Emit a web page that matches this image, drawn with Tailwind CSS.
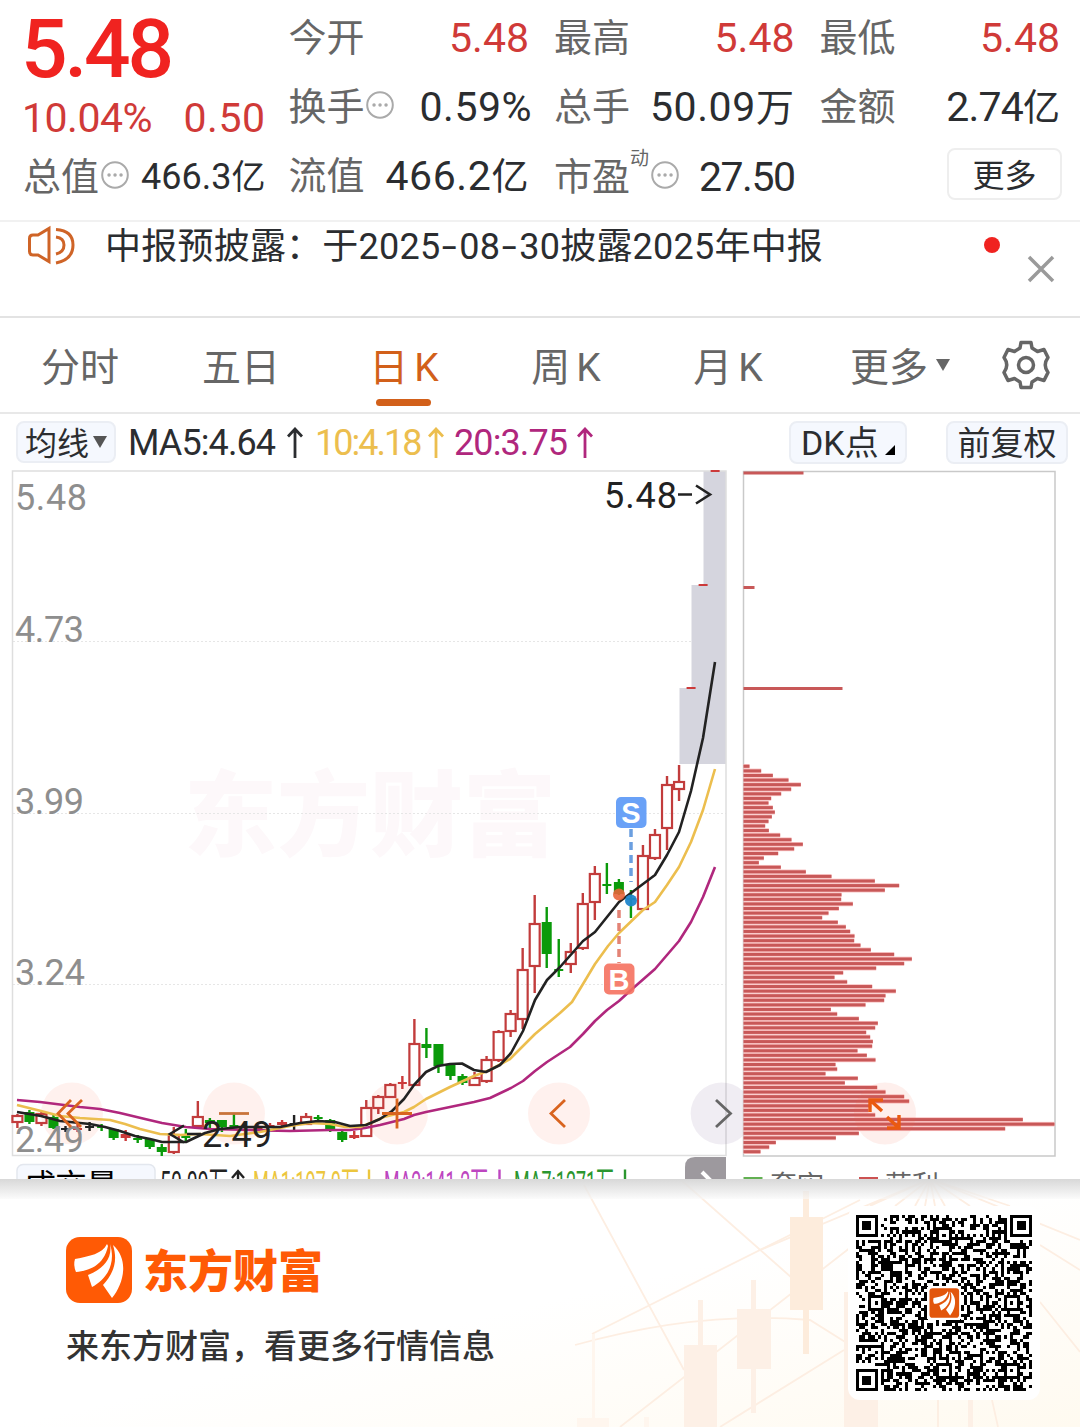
<!DOCTYPE html>
<html lang="zh-CN">
<head>
    <meta charset="UTF-8">
    <meta name="viewport" content="width=device-width, initial-scale=1.0">
    <title>东方财富 - 日K行情</title>
    <script src="https://cdn.jsdelivr.net/npm/@tailwindcss/browser@4"></script>
</head>
<body class="bg-white font-[Roboto,'Noto_Sans_CJK_SC',sans-serif] text-[#2b2d30]">
    <div class="w-[1080px] h-[1427px] overflow-hidden flex flex-col">

        <!-- 行情概览 -->
        <header class="h-[222px] shrink-0 pl-6 pr-5 border-b-2 border-[#f1f1f1] grid grid-cols-4 gap-x-[26px] text-[38px] leading-[69px] whitespace-nowrap">
            <div class="flex flex-col pt-px">
                <div class="h-[84px] -ml-[3px] leading-[96px] text-[82px] font-medium tracking-[-3.2px] text-[#f02320]">5.48</div>
                <div class="h-[58px] leading-[66px] flex justify-between text-[41px] text-[#d03a38]"><span class="tracking-[-0.5px] -ml-0.5">10.04%</span><span class="tracking-[0.5px] -mr-0.5">0.50</span></div>
                <div class="h-[69px] flex justify-between items-center">
                    <span class="text-[#666] flex items-center -ml-px">总值<svg class="w-7 h-7 mb-1.5 ml-0.5 text-[#aaa]" viewBox="0 0 28 28" fill="none" stroke="currentColor"><circle cx="14" cy="14" r="12.8" stroke-width="2"/><path d="M8 14h.1M14 14h.1M20 14h.1" stroke-width="3.4" stroke-linecap="round"/></svg></span>
                    <span class="text-[36px] -mr-0.5">466.3<span class="text-[34px]">亿</span></span>
                </div>
            </div>
            <div class="pt-1 -ml-px">
                <div class="flex justify-between"><span class="text-[#666]">今开</span><span class="text-[41px] text-[#d03a38]">5.48</span></div>
                <div class="flex justify-between">
                    <span class="text-[#666] flex items-center">换手<svg class="w-7 h-7 ml-px mb-1.5 text-[#aaa]" viewBox="0 0 28 28" fill="none" stroke="currentColor"><circle cx="14" cy="14" r="12.8" stroke-width="2"/><path d="M8 14h.1M14 14h.1M20 14h.1" stroke-width="3.4" stroke-linecap="round"/></svg></span>
                    <span class="text-[41px] tracking-[0.5px] -mr-[3px]">0.59%</span>
                </div>
                <div class="flex justify-between"><span class="text-[#666]">流值</span><span class="text-[41px] tracking-[0.6px]">466.2<span class="text-[37px]">亿</span></span></div>
            </div>
            <div class="pt-1 -ml-px">
                <div class="flex justify-between"><span class="text-[#666]">最高</span><span class="text-[41px] text-[#d03a38]">5.48</span></div>
                <div class="flex justify-between"><span class="text-[#666]">总手</span><span class="text-[41px] tracking-[0.6px]">50.09<span class="text-[38px]">万</span></span></div>
                <div class="flex justify-between">
                    <span class="text-[#666] flex items-center">市盈<span class="self-start text-[19px] leading-[32px]">动</span><svg class="w-7 h-7 ml-[2px] mb-1.5 text-[#aaa]" viewBox="0 0 28 28" fill="none" stroke="currentColor"><circle cx="14" cy="14" r="12.8" stroke-width="2"/><path d="M8 14h.1M14 14h.1M20 14h.1" stroke-width="3.4" stroke-linecap="round"/></svg></span>
                    <span class="text-[41px] tracking-[-1.5px]">27.50</span>
                </div>
            </div>
            <div class="pt-1 -ml-px">
                <div class="flex justify-between"><span class="text-[#666]">最低</span><span class="text-[41px] text-[#d03a38]">5.48</span></div>
                <div class="flex justify-between"><span class="text-[#666]">金额</span><span class="text-[41px] tracking-[-0.8px]">2.74<span class="text-[37px] tracking-normal">亿</span></span></div>
                <div class="flex justify-end items-center h-[61px]">
                    <button class="w-[115px] h-[52px] -mr-0.5 pt-1 border-2 border-[#eee] rounded-lg text-[32px] leading-[44px]">更多</button>
                </div>
            </div>
        </header>

        <!-- 公告 -->
        <section class="h-[96px] shrink-0 border-b-2 border-[#e3e3e3] flex whitespace-nowrap">
            <svg class="w-[105px] h-[60px] shrink-0" viewBox="0 222 105 60" fill="none" stroke="#cf6427" stroke-width="3">
                <path d="M33 235h5l11-6.500v33L38 255h-5q-3.500 0-3.500-3.500v-13q0-3.500 3.500-3.500z"/>
                <path d="M56 237q8 1 8 8t-8 9M56 229.500q17 1 17 15.500t-17 18"/>
            </svg>
            <p class="text-[36px] leading-[50px] tracking-[0.22px]">中报预披露：于2025<span class="inline-block w-[19px] text-center scale-x-150">-</span>08<span class="inline-block w-[19px] text-center scale-x-150">-</span>30披露2025年中报</p>
            <span class="ml-auto mt-[15px] w-4 h-4 rounded-full bg-[#f02320]"></span>
            <svg class="w-7 h-7 ml-[27px] mr-[25px] mt-[33px]" viewBox="0 0 28 28" stroke="#9a9a9a" stroke-width="3.500"><path d="M2 2l24 24M26 2L2 26"/></svg>
        </section>

        <!-- 周期切换 -->
        <nav class="h-[96px] shrink-0 pt-[5px] border-b-2 border-[#e8e8e8] flex items-center text-[39px] text-[#666] leading-[88px]">
            <a class="w-[160px] text-center">分时</a>
            <a class="w-[162px] text-center">五日</a>
            <a class="w-[164px] text-center text-[#d2601a] relative">日<span class="ml-1.5">K</span><i class="absolute left-[54px] bottom-[6px] w-[55px] h-[7px] rounded-full bg-[#d2601a]"></i></a>
            <a class="w-[160px] text-center">周<span class="ml-1.5">K</span></a>
            <a class="w-[164px] text-center">月<span class="ml-1.5">K</span></a>
            <a class="w-[180px] flex justify-center items-center gap-2">更多<svg class="w-3.5 h-3 mb-1.5" viewBox="0 0 14 12"><path d="M0 0h14L7 12z" fill="#666"/></svg></a>
            <svg class="w-[52px] h-[52px] ml-[10px] mb-[5px]" viewBox="-26 -26 52 52" fill="none" stroke="#666" stroke-width="3.500" stroke-linejoin="round">
                <path d="M-5-22.500H5L6-17 11.500-13.500 18-15.500 22-7.500Q16.500 0 22 7.500L18 15.500 11.500 13.500 6 17 5 22.500H-5L-6 17-11.500 13.500-18 15.500-22 7.500Q-16.500 0-22-7.500L-18-15.500-11.500-13.500-6-17z"/>
                <circle r="7.500"/>
            </svg>
        </nav>

        <!-- 指标栏 -->
        <section class="h-[56px] shrink-0 pl-4 pr-3 flex items-center text-[36px] leading-[42px] whitespace-nowrap">
            <button class="w-[100px] h-[42px] border-2 border-[#ebeef4] bg-[#f5f8fe] rounded-lg flex items-center justify-center gap-1 text-[32px]"><span class="pt-[3px]">均线</span><svg class="w-3.5 h-3" viewBox="0 0 14 12"><path d="M0 0h14L7 12z" fill="#555"/></svg></button>
            <span class="w-[187px] pl-3 pt-0.5 flex items-center justify-between"><span class="tracking-[-0.9px]">MA5:4.64</span><svg class="w-4 h-8 shrink-0" viewBox="0 0 16 32" fill="none" stroke="currentColor" stroke-width="2.800"><path d="M8 31V2M1 9.500l7-7.500 7 7.500"/></svg></span>
            <span class="w-[141px] pl-3 pt-0.5 flex items-center justify-between text-[#ecbe4e]"><span class="tracking-[-2px]">10:4.18</span><svg class="w-4 h-8 shrink-0" viewBox="0 0 16 32" fill="none" stroke="currentColor" stroke-width="2.800"><path d="M8 31V2M1 9.500l7-7.500 7 7.500"/></svg></span>
            <span class="w-[149px] pl-2.5 pt-0.5 flex items-center justify-between text-[#b0277d]"><span class="tracking-[-0.9px]">20:3.75</span><svg class="w-4 h-8 shrink-0" viewBox="0 0 16 32" fill="none" stroke="currentColor" stroke-width="2.800"><path d="M8 31V2M1 9.500l7-7.500 7 7.500"/></svg></span>
            <button class="ml-auto w-[118px] h-[43px] border-2 border-[#ebeef4] bg-[#f5f8fe] rounded-lg flex items-center pl-2.5 text-[34px]"><span class="pt-0.5">DK点</span><svg class="w-2.5 h-2.5 ml-1.5 mt-4" viewBox="0 0 10 10"><path d="M10 0v10H0z"/></svg></button>
            <button class="ml-[39px] w-[122px] h-[43px] border-2 border-[#ebeef4] bg-[#f5f8fe] rounded-lg text-[33px] leading-[41px]">前复权</button>
        </section>

        <!-- K线图与筹码分布 -->
        <svg class="w-[1080px] h-[709px] shrink-0" viewBox="0 470 1080 709">
            <text x="184" y="849" font-size="93" font-weight="900" fill="#fdf8fa" textLength="372">东方财富</text>
            <g stroke="#e6e6e6" stroke-dasharray="2 2"><path d="M13 641.500H726M13 813.500H726M13 984.500H726"/></g>
            <path d="M679.500 764V688H691.500V585H703.500V471H726V764z" fill="#d5d5de"/>
            <rect x="12.500" y="471" width="713.500" height="684.500" fill="none" stroke="#dedede" stroke-width="1.500"/>
            <g fill="#fa6446" fill-opacity=".09">
                <circle cx="72" cy="1113.500" r="31"/><circle cx="234" cy="1113.500" r="31"/><circle cx="397" cy="1113.500" r="31"/>
                <circle cx="559" cy="1113.500" r="31"/><path d="M743 1091a31 31 0 1 0 0 45z" fill="#5a3c78"/>
            </g>
            <g id="candles" stroke-width="2.200"></g>
            <g fill="none" stroke-width="2.600" stroke-linejoin="round">
                <path id="ma20" stroke="#b0277d"/>
                <path id="ma10" stroke="#ecbe4e"/>
                <path id="ma5" stroke="#222"/>
            </g>
            <g font-size="36" fill="#8e8e8e">
                <text x="15" y="510" textLength="72">5.48</text>
                <text x="15" y="642" textLength="69">4.73</text>
                <text x="15" y="814" textLength="69">3.99</text>
                <text x="15" y="985" textLength="70">3.24</text>
                <text x="15" y="1152" textLength="69">2.49</text>
            </g>
            <g font-size="36" fill="#222">
                <text x="604" y="508" textLength="73">5.48</text>
                <path d="M678 494.500h14M696 485.500l14 9-14 9" fill="none" stroke="#222" stroke-width="2.600"/>
                <text x="202" y="1147" textLength="70">2.49</text>
                <path d="M184 1125.500l-14 8.500 14 8.500M187 1134h14" fill="none" stroke="#222" stroke-width="2.600"/>
            </g>
            <!-- 买卖点 -->
            <path d="M631 829V882" stroke="#6b9fe0" stroke-width="3.500" stroke-dasharray="8 5"/>
            <path d="M619 910V963" stroke="#e38375" stroke-width="3.500" stroke-dasharray="8 5"/>
            <circle cx="619" cy="894.500" r="6" fill="#e8643a" fill-opacity=".9"/><circle cx="631" cy="900.500" r="6" fill="#1f86cc" fill-opacity=".95"/>
            <rect x="616" y="797" width="30.500" height="31" rx="5" fill="#69a1f7"/>
            <rect x="604" y="963.500" width="30.500" height="31" rx="5" fill="#f5715f" fill-opacity=".9"/>
            <g fill="#fff" font-size="29" font-weight="700" text-anchor="middle" font-family="Liberation Sans"><text x="631" y="823">S</text><text x="619" y="989.500">B</text></g>

            <rect x="743.500" y="471.500" width="311.500" height="684.500" fill="none" stroke="#c9c9c9" stroke-width="1.500"/>
            <g id="chips" fill="#c85858"></g>
            <circle cx="885" cy="1113.500" r="31" fill="#fa6446" fill-opacity=".1"/>

            <!-- 图表操作按钮 -->
            <g fill="none" stroke="#d9641f" stroke-width="2.800">
                <path d="M71 1100L58 1113.500 71 1127M82 1100L68 1113.500 81 1127"/>
                <path d="M219 1113.500h30" stroke="#c9743a"/>
                <path d="M382 1113.500h30M397 1098.500v30"/>
                <path d="M565 1100L551 1113.500 565 1127"/>
                <path d="M716 1100L730.500 1113.500 716 1127" stroke="#666"/>
                <path d="M870 1112V1100h13M870 1100l12 11M887 1128h12V1115M899 1128l-12-11" stroke="#ea5a10" stroke-width="3.400"/>
            </g>

            <!-- 成交量栏 -->
            <rect x="17" y="1164.500" width="138" height="40" rx="6" fill="#f5f8fe" stroke="#e3e7ee" stroke-width="1.500"/>
            <text x="24" y="1197" font-size="32" textLength="94">成交量</text>
            <g font-size="33">
                <text x="160" y="1194.500" textLength="68" lengthAdjust="spacingAndGlyphs" fill="#222">50.09万</text>
                <text x="253" y="1194.500" textLength="106" lengthAdjust="spacingAndGlyphs" fill="#ecc63e">MA1:197.0万</text>
                <text x="384" y="1194.500" textLength="104" lengthAdjust="spacingAndGlyphs" fill="#bd46c0">MA2:141.2万</text>
                <text x="514" y="1194.500" textLength="100" lengthAdjust="spacingAndGlyphs" fill="#2b962f">MA7:1271万</text>
            </g>
            <g fill="none" stroke-width="2.400">
                <path d="M238 1195V1171M232 1178l6-7 6 7" stroke="#222"/>
                <path d="M369 1169.500v20" stroke="#ecc63e"/><path d="M499.500 1169.500v20" stroke="#bd46c0"/><path d="M625 1169.500v20" stroke="#2b962f"/>
            </g>
            <path d="M685 1180V1167q0-10 10-10h31v23z" fill="#9d999e"/>
            <path d="M702 1172l10 10" stroke="#fff" stroke-width="4"/>
            <path d="M743.500 1177h19v3h-19z" fill="#62b052"/><path d="M859 1177h19v3h-19z" fill="#cc5252"/>
            <g font-size="27" fill="#666"><text x="770" y="1194.500">套牢</text><text x="885" y="1194.500">获利</text></g>
        </svg>

        <!-- 底部分享栏 -->
        <footer class="relative h-[248px] shrink-0 flex justify-between bg-linear-to-br from-white from-50% to-[#fffaf0]">
            <svg class="absolute inset-0 w-full h-full" viewBox="0 1179 1080 248" fill="none">
                <g stroke="#fdeee2" stroke-width="1.800">
                    <path d="M584 1185L684 1370M680 1179L792 1278M592 1334L792 1234 860 1200M620 1427L860 1240M720 1427L844 1350M575 1345Q700 1310 810 1320L850 1345"/>
                    <path d="M930 1179L760 1250M930 1179L870 1206M930 1179L895 1206M930 1179L915 1206M930 1179L925 1206M930 1179L935 1206M930 1179L945 1206M930 1179L970 1206M930 1179L1010 1206M930 1179L1080 1240M1040 1245L1080 1270M1040 1302L1080 1352M938 1400v27M992 1400l6 27"/>
                </g>
                <g fill="#fdf0e6">
                    <path d="M790 1217h13V1191h6v26h14v93h-14v44h-6v-44h-13z" fill="#fdecdc"/>
                    <path d="M737 1309h14V1280h5v29h15v60h-15v44h-5v-44h-14z"/>
                    <path d="M684 1345h14V1300h5v45h14v82h-33zM844 1427V1292h4v30h30v105zM968 1400h5v27h-5z"/>
                    <path d="M577 1427v-9h15v-84h3v84h14v9zM644 1417h5v10h-5z" fill="#fff6ee"/>
                </g>
            </svg>
            <div class="absolute inset-x-0 top-0 h-[20px] bg-linear-to-b from-[#d8d8d8] to-[#f9f9f9]/60"></div>

            <div class="relative pl-[66px] pt-[58px] whitespace-nowrap">
                <div class="flex items-center h-[66px] gap-[11px]">
                    <svg class="w-[66px] h-[66px]" viewBox="0 0 66 66">
                        <rect width="66" height="66" rx="14" fill="#ff5a05"/>
                        <g id="mark" fill="#fff">
                            <path d="M41 7C36 17 24 19 9 22Q7 28 10 35C22 34 38 29 42 9z"/>
                            <path d="M44 7C47 23 35 33 22 38L26 50C38 44 51 29 44 7z"/>
                            <path d="M47 8C53 27 45 39 37 48L46 61C57 48 64 23 47 8z"/>
                        </g>
                    </svg>
                    <span class="mt-1.5 text-[45px] font-black text-[#ff5a05] leading-[66px]">东方财富</span>
                </div>
                <p class="mt-5 text-[33px] leading-[48px] text-[#333] font-medium">来东方财富，看更多行情信息</p>
            </div>
            <div class="relative w-[192px] h-[194px] mt-[27px] mr-[40px] p-2 pt-[9px] rounded-xl bg-white">
                <svg class="w-[176px] h-[176px]" viewBox="0 0 57 57" shape-rendering="crispEdges">
                    <path id="qr" fill="#000"/>
                    <rect x="23" y="23" width="11" height="11" rx="1" fill="#fff"/>
                    <g shape-rendering="auto"><rect x="23.800" y="23.700" width="9.600" height="9.600" rx="1" fill="#e2560c"/><use href="#mark" transform="translate(23.800 23.700) scale(.145)"/></g>
                </svg>
            </div>
        </footer>
    </div>

    <script>
        // [类型, 实体上, 实体下, 影线上, 影线下]  r=空心红 f=实心红 g=绿 k=黑
        const candles = [
            ['r',1116,1122,1114,1128],['g',1112,1122,1110,1124],['r',1114,1123,1112,1126],['g',1117,1128,1115,1129],
            ['k',1128,1130,1126,1132],['f',1128,1130,1124,1132],['k',1126,1128,1122,1131],['g',1126,1128,1124,1131],
            ['g',1129,1138,1129,1140],['f',1134,1138,1130,1141],['g',1138,1140,1135,1143],['g',1139,1147,1138,1149],
            ['g',1147,1152,1144,1156],['r',1135,1152,1127,1154],['g',1136,1138,1129,1141],['r',1117,1126,1101,1127],
            ['g',1120,1123,1118,1130],['g',1120,1127,1120,1132],['g',1125,1127,1114,1127],['f',1129,1131,1127,1133],
            ['f',1127,1129,1125,1131],['f',1125,1127,1123,1128],['f',1122,1125,1120,1127],['k',1123,1125,1115,1130],
            ['r',1117,1124,1113,1125],['g',1117,1119,1115,1122],['g',1120,1131,1119,1132],['g',1132,1140,1130,1142],
            ['f',1135,1138,1131,1139],['r',1108,1136,1100,1137],['r',1097,1108,1095,1114],['r',1085,1097,1083,1098],
            ['f',1082,1084,1076,1089],['r',1044,1085,1019,1086],['g',1044,1048,1028,1058],['g',1044,1066,1044,1073],
            ['g',1065,1076,1064,1080],['g',1076,1083,1074,1085],['r',1078,1085,1072,1086],['r',1060,1081,1056,1083],
            ['r',1032,1060,1030,1062],['r',1014,1031,1010,1037],['r',970,1019,948,1029],['r',924,966,895,993],
            ['g',922,954,907,968],['g',969,971,939,977],['r',952,964,943,973],['r',904,948,893,950],
            ['r',874,902,866,920],['g',884,886,863,894],['g',882,894,879,895],['g',898,900,890,918],
            ['r',856,909,845,910],['r',835,858,829,860],['r',785,828,776,850],['r',782,789,765,801],
            ['f',687,689,688,688],['f',584,586,585,585],['f',470,472,471,471]
        ];
        const colors = { r: '#c23c3c', f: '#cc3a3a', g: '#0a9a0a', k: '#222' };
        document.getElementById('candles').innerHTML = candles.map(([t, a, b, h, l], i) => {
            const x = 17.4 + 12.03 * i;
            const c = colors[t];
            const w = b - a < 3 ? 9 : 10;
            const fill = t === 'r' ? 'none' : c;
            const border = t === 'r' ? ` stroke="${c}"` : '';
            return `<path d="M${x} ${h}V${a}M${x} ${b}V${l}" stroke="${c}" stroke-width="2.4"/>` +
                `<rect x="${x - w / 2}" y="${a}" width="${w}" height="${b - a}" fill="${fill}"${border}/>`;
        }).join('');

        // 均线
        document.getElementById('ma5').setAttribute('d', 'M17 1112L41 1116 60 1121 90 1124 105 1127 120 1131 135 1136 150 1139 162 1142 186 1142 205 1133 220 1129 240 1127 280 1127 300 1123 318 1121 335 1122 350 1126 366 1125 380 1119 392 1111 404 1099 414 1085 426 1072 438 1066 450 1064 462 1063.5 474 1070 486 1072 500 1065 511 1053 523 1031 535 1000 547 980 560 967 583 941 595 932 607 917 619 902 643 884 655 875 667 855 679 832 691 791 703 738 715 662');
        document.getElementById('ma10').setAttribute('d', 'M17 1105L41 1111 60 1116 80 1118 110 1120 125 1124 140 1129 160 1134 180 1135 200 1134 230 1136 260 1132 290 1126 310 1123 330 1124 345 1127 360 1127 373 1122 384 1117 404 1112 414 1107 426 1099 450 1087 474 1076 490 1070 510 1059 523 1046 535 1034 560 1013 572 1002 583 984 595 964 608 946 619 933 643 910 655 902 667 885 679 867 691 842 703 810 715 769');
        document.getElementById('ma20').setAttribute('d', 'M17 1100L40 1102 80 1107 100 1109 120 1113 145 1119 162 1123 186 1127 210 1129 250 1130 290 1131 330 1130 350 1130 365 1128 380 1125 404 1119 414 1115 426 1112 450 1107 474 1102 490 1098 511 1088 523 1081 535 1071 547 1062 570 1047 583 1034 595 1021 607 1010 619 1001 631 990 655 969 667 955 679 941 691 922 703 897 715 867');

        // 筹码分布
        const chips = [18,53,88,135,172,143,113,83,75,88,94,85,75,65,76,110,144,178,152,104,61,46,112,187,264,394,467,424,294,293,328,286,255,236,283,307,320,333,332,351,382,452,505,482,398,
            299,273,311,386,457,426,422,366,262,281,346,403,395,368,380,388,386,342,370,396,276,281,246,343,304,401,426,482,497,383,375,395,838,933,785,346,277,97,77,51];
        document.getElementById('chips').innerHTML = chips.map((v, i) => {
            const y = 766.3 + 4.588 * i;
            return `<rect x="743.5" y="${y - 2.3}" width="${v / 3}" height="4.6" fill="#f9c0c0"/>` +
                `<rect x="743.5" y="${y - 1.5}" width="${v / 3}" height="3"/>`;
        }).join('') + '<rect x="743.5" y="471.5" width="60" height="3"/><rect x="743.5" y="586" width="11" height="3"/><rect x="743.5" y="687" width="99" height="3"/>';

        // 二维码
        const N = 57;
        let seed = 20250830;
        const rand = () => (seed = (seed * 1103515 + 12345) % 2147483648) / 2147483648;
        const grid = Array.from({ length: N }, () => Array.from({ length: N }, () => rand() < 0.51));
        const ring = (cx, cy, r, lights) => {
            for (let y = -r; y <= r; y++) for (let x = -r; x <= r; x++) {
                const d = Math.max(Math.abs(x), Math.abs(y));
                if (grid[cy + y] && cx + x >= 0 && cx + x < N) grid[cy + y][cx + x] = !lights.includes(d);
            }
        };
        for (let i = 8; i < N - 8; i++) grid[6][i] = grid[i][6] = i % 2 === 0;
        ring(3, 3, 4, [2, 4]); ring(N - 4, 3, 4, [2, 4]); ring(3, N - 4, 4, [2, 4]);
        [[28, 6], [6, 28], [50, 28], [28, 50], [50, 50]].forEach(([x, y]) => ring(x, y, 2, [1]));
        let d = '';
        grid.forEach((row, y) => row.forEach((on, x) => { if (on) d += `M${x} ${y}h1v1h-1z`; }));
        document.getElementById('qr').setAttribute('d', d);
    </script>
</body>
</html>
